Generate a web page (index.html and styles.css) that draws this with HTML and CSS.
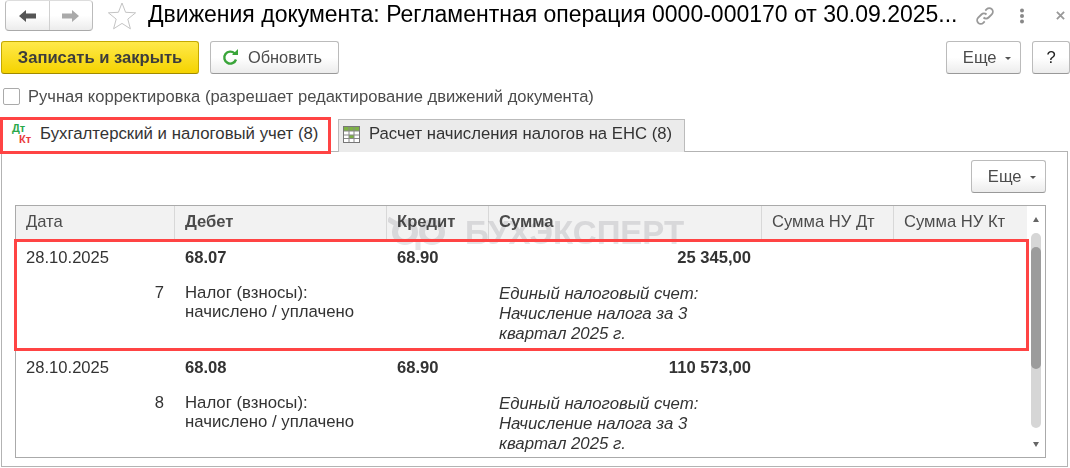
FILE: index.html
```html
<!DOCTYPE html>
<html lang="en">
<head>
    <meta charset="UTF-8">
    <title>Движения документа</title>
    <link rel="stylesheet" href="styles.css">
</head>
<body>
    <div class="title-row">
        <div class="nav-group">
            <div class="nav-btn">
                <svg width="17" height="14" viewBox="0 0 17 14"><path d="M0 7 7 1v3.500h10v5H7V13z" fill="#555"/></svg>
            </div>
            <div class="nav-btn">
                <svg width="17" height="14" viewBox="0 0 17 14"><path d="M17 7 10 1v3.500H0v5h10V13z" fill="#aaa"/></svg>
            </div>
        </div>
        <svg class="star" width="30" height="30" viewBox="0 0 30 30"><path d="M15 2l3.600 9.300 10 .5-7.800 6.300 2.600 9.700L15 22.400l-8.400 5.400 2.600-9.700-7.800-6.300 10-.5z" fill="#fff" stroke="#c4c4c4"/></svg>
        <div class="doc-title">Движения документа: Регламентная операция 0000-000170 от 30.09.2025...</div>
        <div class="window-icons">
            <svg width="20" height="20" viewBox="0 0 20 20" fill="none" stroke="#999" stroke-width="1.800"><path d="M8.500 11.500a3.600 3.600 0 0 0 5.100 0l3.200-3.200a3.600 3.600 0 0 0-5.100-5.100L10.300 4.600"/><path d="M11.500 8.500a3.600 3.600 0 0 0-5.100 0l-3.200 3.200a3.600 3.600 0 0 0 5.100 5.100l1.400-1.400"/></svg>
            <svg class="dots" width="6" height="16" viewBox="0 0 6 16" fill="#888"><circle cx="3" cy="2.500" r="2"/><circle cx="3" cy="8" r="2"/><circle cx="3" cy="13.500" r="2"/></svg>
            <svg class="close" width="9" height="9" viewBox="0 0 10 10" stroke="#999" stroke-width="2"><path d="M1 1l8 8M9 1l-8 8"/></svg>
        </div>
    </div>

    <div class="command-row">
        <button class="btn btn-primary">Записать и закрыть</button>
        <button class="btn btn-refresh">
            <svg width="17" height="17" viewBox="0 0 17 17" fill="none"><path d="M14 10.500A6 6 0 1 1 12.600 4.400" stroke="#3aa53a" stroke-width="2.400"/><path d="M10 6h6V0z" fill="#3aa53a"/></svg>
            Обновить
        </button>
        <button class="btn btn-more btn-push">Еще <span class="caret"></span></button>
        <button class="btn btn-help">?</button>
    </div>

    <label class="check-row">
        <span class="checkbox"></span>
        <span class="check-text">Ручная корректировка (разрешает редактирование движений документа)</span>
    </label>

    <div class="tabs">
        <div class="tab tab-active">
            <span class="dtkt"><span class="dt">Дт</span><span class="kt">Кт</span></span>
            Бухгалтерский и налоговый учет (8)
        </div>
        <div class="tab tab-other">
            <svg width="17" height="17" viewBox="0 0 17 17"><rect x=".5" y=".5" width="16" height="16" fill="#fff" stroke="#777"/><path d="M1 1h15v4H1zM6 9h5v3H6z" fill="#7db243"/><path d="M1 5h15M1 9h15M1 12.500h15M6 1v15M11 1v15" stroke="#888" fill="none"/></svg>
            Расчет начисления налогов на ЕНС (8)
        </div>
    </div>

    <div class="panel">
        <div class="panel-bar">
            <button class="btn btn-more">Еще <span class="caret"></span></button>
        </div>
        <div class="grid-wrap">
            <div class="grid-main">
                <div class="grid-head">
                    <div class="head-cell">Дата</div>
                    <div class="head-cell head-bold">Дебет</div>
                    <div class="head-cell head-bold">Кредит</div>
                    <div class="head-cell head-bold">Сумма</div>
                    <div class="head-cell">Сумма НУ Дт</div>
                    <div class="head-cell">Сумма НУ Кт</div>
                </div>
                <div class="grid-row">
                    <div class="date">28.10.2025</div>
                    <div class="bold">68.07</div>
                    <div class="bold">68.90</div>
                    <div class="bold right">25 345,00</div>
                    <div class="right num">7</div>
                    <div class="sub">Налог (взносы):<br>начислено / уплачено</div>
                    <div></div>
                    <div class="italic">Единый налоговый счет:<br>Начисление налога за 3<br>квартал 2025 г.</div>
                </div>
                <div class="grid-row">
                    <div class="date">28.10.2025</div>
                    <div class="bold">68.08</div>
                    <div class="bold">68.90</div>
                    <div class="bold right">110 573,00</div>
                    <div class="right num">8</div>
                    <div class="sub">Налог (взносы):<br>начислено / уплачено</div>
                    <div></div>
                    <div class="italic">Единый налоговый счет:<br>Начисление налога за 3<br>квартал 2025 г.</div>
                </div>
            </div>
            <div class="scroll">
                <span class="arrow-up"></span>
                <div class="track"><div class="thumb"></div></div>
                <span class="arrow-down"></span>
            </div>
        </div>
    </div>

    <!-- наложения поверх таблицы -->
    <div class="mark">
        <svg width="60" height="36" viewBox="0 0 60 36" fill="none" stroke="#e4e4e6" stroke-width="6"><path d="M0 4l10 6M30 26v9" stroke-width="5"/><circle cx="17" cy="17" r="10"/><circle cx="44" cy="17" r="10"/></svg>
        <span>БУХЭКСПЕРТ</span>
    </div>
    <div class="red-box red-tab"></div>
    <div class="red-box red-row"></div>
</body>
</html>
```

FILE: styles.css
```css
*{
    box-sizing: border-box;
}
html, body{
    margin: 0;
    height: 468px;
    overflow: hidden;
}
body{
    position: relative;
    background: #fff;
    font-family: "Liberation Sans", Arial, sans-serif;
    font-size: 16.6px;
    color: #333;
}
.title-row{
    display: flex;
    align-items: center;
    height: 31px;
    padding-left: 5px;
}
.nav-group{
    display: flex;
    width: 88px;
    height: 31px;
    border: 1px solid #bbb;
    border-top-color: #ddd;
    border-bottom-color: #aaa;
    border-radius: 4px;
    background: linear-gradient(#fff 50%, #ececec);
}
.nav-btn{
    flex: 1;
    display: flex;
    align-items: center;
    justify-content: center;
}
.nav-btn + .nav-btn{
    border-left: 1px solid #d0d0d0;
}
.star{
    margin-left: 14px;
}
.doc-title{
    margin-left: 11px;
    padding-bottom: 3px;
    width: 812px;
    font-size: 23px;
    color: #000;
    white-space: nowrap;
    overflow: hidden;
}
.window-icons{
    display: flex;
    align-items: center;
    margin-left: 15px;
}
.dots{
    margin-left: 24px;
}
.close{
    margin-left: 31px;
}
.command-row{
    display: flex;
    gap: 11px;
    margin-top: 10px;
    padding: 0 0 0 1px;
    height: 33px;
}
.btn{
    height: 33px;
    padding: 0;
    border: 1px solid #bbb;
    border-bottom-color: #999;
    border-radius: 3px;
    background: linear-gradient(#fff 50%, #ececec);
    font-family: inherit;
    font-size: 16.6px;
    color: #4c4c4c;
}
.btn-primary{
    width: 198px;
    border-color: #c4a900;
    border-bottom-color: #a08a00;
    background: linear-gradient(#ffe94a, #f5d300);
    font-weight: bold;
    color: #3c3c3c;
}
.btn-refresh{
    display: flex;
    align-items: center;
    justify-content: center;
    gap: 9px;
    width: 129px;
    padding-right: 5px;
    font-size: 16.4px;
}
.btn-more{
    width: 75px;
    padding-left: 7px;
}
.btn-push{
    margin-left: auto;
}
.btn-help{
    width: 38px;
    color: #222;
}
.caret{
    display: inline-block;
    margin-left: 4px;
    vertical-align: 3px;
    border: 3px solid transparent;
    border-top-color: #555;
    border-bottom-width: 0;
}
.check-row{
    display: flex;
    align-items: center;
    gap: 8px;
    height: 18px;
    margin-top: 13px;
    padding-left: 3px;
    font-size: 16.56px;
    color: #4c4c4c;
}
.check-text{
    padding-top: 1px;
}
.checkbox{
    width: 17px;
    height: 17px;
    border: 1px solid #aaa;
    border-radius: 2px;
    background: #fff;
}
.tabs{
    display: flex;
    height: 33px;
    margin-top: 14px;
    padding-left: 2px;
}
.tab{
    display: flex;
    align-items: center;
    padding-bottom: 4px;
    font-size: 16.8px;
    white-space: nowrap;
}
.tab-active{
    position: relative;
    z-index: 1;
    width: 328px;
    height: 34px;
    padding-left: 10px;
    gap: 6px;
    background: #fff;
}
.tab-other{
    width: 347px;
    margin-left: 8px;
    padding-left: 4px;
    gap: 9px;
    border: 1px solid #bbb;
    border-bottom: 0;
    background: #ebebeb;
    font-size: 16.7px;
}
.dtkt{
    display: flex;
    flex-direction: column;
    width: 22px;
    font-size: 11px;
    font-weight: bold;
    line-height: 11px;
}
.dt{
    color: #2aa84a;
}
.kt{
    margin-left: 7px;
    color: #ea3c3c;
}
.panel{
    height: 316px;
    margin: -1px 2px 0 1px;
    padding: 8px 21px 0 13px;
    border: 1px solid #b3b3b3;
}
.panel-bar{
    display: flex;
    justify-content: flex-end;
    height: 33px;
}
.grid-wrap{
    display: flex;
    height: 253px;
    margin-top: 12px;
    border: 1px solid #aaa;
    overflow: hidden;
}
.grid-main{
    flex: 1;
    min-width: 0;
}
.grid-head{
    display: grid;
    grid-template-columns: 158px 212px 102px 273px 132px 1fr;
    height: 34px;
    background: #f2f2f2;
    color: #4c4c4c;
}
.head-cell{
    display: flex;
    align-items: center;
    padding: 0 0 2px 10px;
    border-left: 1px solid #d8d8d8;
}
.head-cell:first-child{
    border-left: 0;
}
.head-bold{
    font-weight: bold;
}
.grid-row{
    display: grid;
    grid-template-columns: 158px 212px 102px 263px;
    grid-template-rows: 34px auto;
    height: 110px;
    line-height: 19px;
}
.grid-row > div{
    padding-left: 11px;
    align-self: center;
}
.grid-row > .date{
    padding-left: 10px;
}
.grid-row > .num{
    align-self: start;
    padding-top: 9px;
    padding-right: 10px;
}
.grid-row > .sub{
    align-self: start;
    padding-top: 9px;
    font-size: 16.75px;
}
.grid-row > .italic{
    align-self: start;
    padding-top: 10px;
    line-height: 20px;
    font-size: 16.8px;
    font-style: italic;
    white-space: nowrap;
}
.grid-row > :nth-child(5){
    grid-column: 1;
}
.grid-row > .right{
    text-align: right;
}
.bold{
    font-weight: bold;
}
.scroll{
    display: flex;
    flex-direction: column;
    align-items: center;
    width: 18px;
    flex: none;
    background: #fff;
}
.arrow-up, .arrow-down{
    flex: none;
    border: 3px solid transparent;
}
.arrow-up{
    margin-top: 11px;
    border-bottom: 5px solid #666;
    border-top-width: 0;
}
.arrow-down{
    margin-top: 14px;
    border-top: 5px solid #666;
    border-bottom-width: 0;
}
.track{
    width: 10px;
    height: 195px;
    margin-top: 11px;
    border-radius: 5px;
    background: #d6d6d6;
    overflow: hidden;
}
.thumb{
    width: 10px;
    height: 122px;
    margin-top: 14px;
    border-radius: 5px;
    background: #9c9c9c;
}
.mark{
    position: absolute;
    left: 388px;
    top: 214px;
    display: flex;
    align-items: center;
    gap: 17px;
    font-size: 33px;
    font-weight: bold;
    color: #e4e4e6;
    mix-blend-mode: multiply;
    pointer-events: none;
}
.red-box{
    position: absolute;
    z-index: 2;
    border: 3px solid #ff4444;
    pointer-events: none;
}
.red-tab{
    left: 0;
    top: 117px;
    width: 331px;
    height: 37px;
}
.red-row{
    left: 14px;
    top: 239px;
    width: 1015px;
    height: 112px;
}
```
